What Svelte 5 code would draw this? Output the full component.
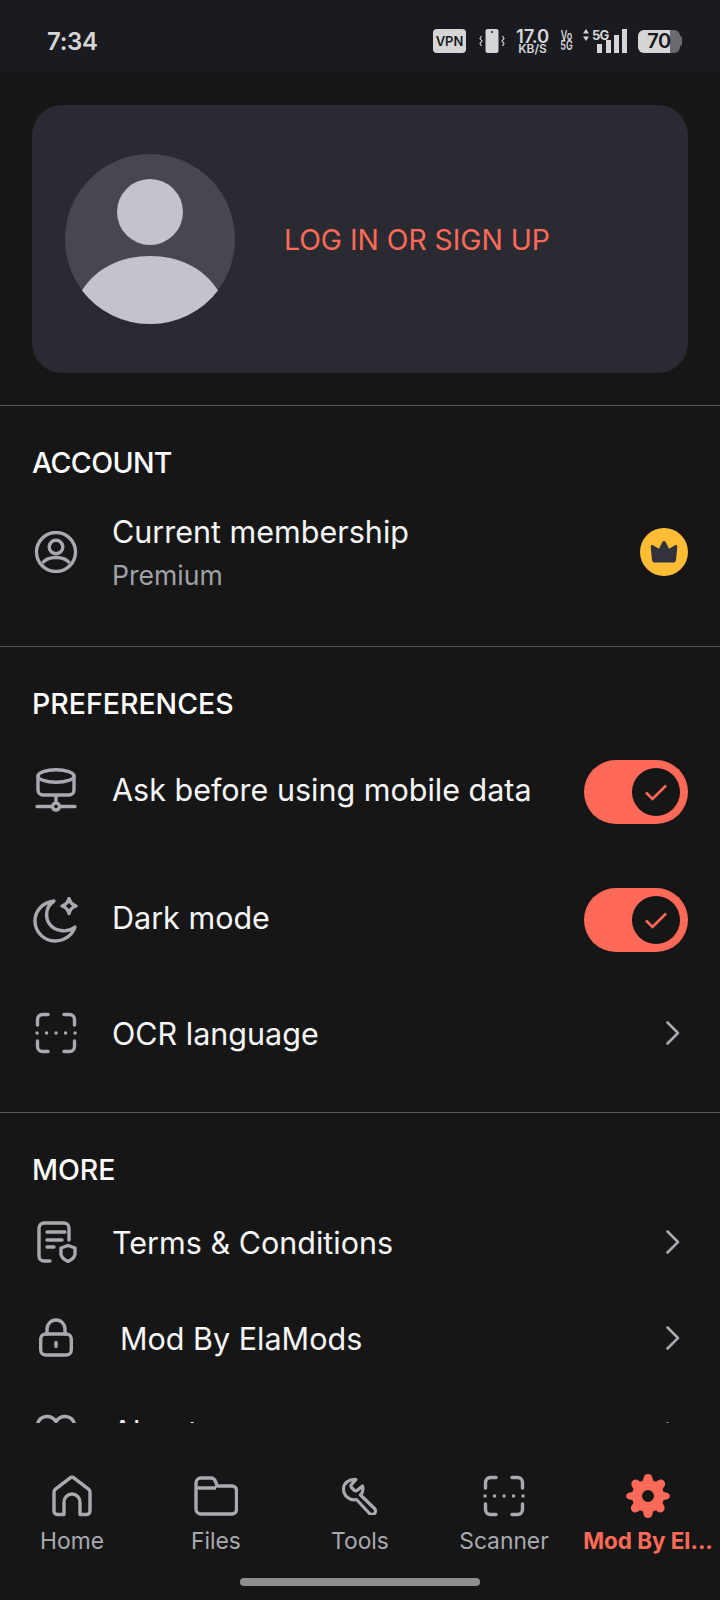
<script>
	const navItems = [
		{ label: 'Home', icon: 'home' },
		{ label: 'Files', icon: 'files' },
		{ label: 'Tools', icon: 'tools' },
		{ label: 'Scanner', icon: 'scan' },
		{ label: 'Mod By El...', icon: 'gear', active: true }
	];
</script>

{#snippet chevron()}
	<svg class="chevron" viewBox="0 0 16 26" width="16" height="26" fill="none">
		<path d="M2.500 2.500 13 13 2.500 23.500" stroke="#a9a9b0" stroke-width="2.600" stroke-linecap="round" stroke-linejoin="round" />
	</svg>
{/snippet}

{#snippet toggle()}
	<span class="toggle">
		<span class="knob">
			<svg viewBox="0 0 24 24" width="24" height="24" fill="none">
				<path d="M2 12.500 8.500 19 22 5.500" stroke="#ff6a58" stroke-width="2.600" />
			</svg>
		</span>
	</span>
{/snippet}

{#snippet scanIcon()}
	<svg viewBox="0 0 42 42" width="42" height="42" fill="none" stroke="#a9a9b0" stroke-width="3.400" stroke-linecap="round">
		<path d="M13 2.500H7.500a5 5 0 0 0-5 5V13M29 2.500h5.500a5 5 0 0 1 5 5V13M13 39.500H7.500a5 5 0 0 1-5-5V29M29 39.500h5.500a5 5 0 0 0 5-5V29" />
		<path d="M2 21h.1M11.500 21h.1M21 21h.1M30.500 21h.1M40 21h.1" />
	</svg>
{/snippet}

<div class="screen">
	<header class="status">
		<span class="time">7:34</span>
		<div class="status-icons">
			<span class="vpn">VPN</span>
			<svg class="vib" viewBox="0 0 26 24" width="26" height="24" fill="none">
				<rect x="6.500" y="0" width="13" height="24" rx="2" fill="#d6d6d6" />
				<circle cx="13" cy="3" r="1" fill="#1a1b21" />
				<path d="M2.500 7 1 9.500 3 12 1 14.500 2.500 17M23.500 7 25 9.500 23 12l2 2.500-1.500 2.500" stroke="#d6d6d6" stroke-width="1.200" />
			</svg>
			<span class="speed"><b>17.0</b><i>KB/S</i></span>
			<span class="volte"><b>Vo</b><b>5G</b></span>
			<span class="signal">
				<span class="net"><svg viewBox="0 0 6 12" width="6" height="12"><path d="M3 0 6 4.500H0zM3 12 0 7.500h6z" fill="#d6d6d6" /></svg>5G</span>
				<svg class="bars" viewBox="0 0 30 24" width="30" height="24"><path d="M0 15h5v9H0zM9 11h5v13H9zM17 6h5v18h-5zM25 0h5v24h-5z" fill="#d6d6d6" /></svg>
			</span>
			<span class="battery">
				<span class="level">70</span>
				<span class="nub"></span>
			</span>
		</div>
	</header>

	<main class="content">
		<div class="card-wrap">
			<section class="card">
				<svg class="avatar" viewBox="0 0 170 170" width="170" height="170">
					<circle cx="85" cy="85" r="85" fill="#47474f" />
					<circle cx="85" cy="58" r="33" fill="#c3c3cd" />
					<path d="M17 136.500C32 113 57 102 85 102s53 11 68 34.500A85 85 0 0 1 85 170a85 85 0 0 1-68-33.500z" fill="#c3c3cd" />
				</svg>
				<span class="login">LOG IN OR SIGN UP</span>
			</section>
		</div>

		<section class="group account">
			<h2>ACCOUNT</h2>
			<div class="row member">
				<svg class="icon" viewBox="0 0 42 42" width="42" height="42" fill="none" stroke="#a9a9b0" stroke-width="3.400">
					<circle cx="21" cy="21" r="19.500" />
					<circle cx="21" cy="16" r="6.800" />
					<path d="M7.500 32c3-4 8-5.500 13.500-5.500S31.500 28 34.500 32" />
				</svg>
				<div class="label">
					<span>Current membership</span>
					<small>Premium</small>
				</div>
				<span class="crown">
					<svg viewBox="0 0 30 24" width="30" height="24"><path d="M15 1c1 0 1.500.8 2 1.800l3 6 6-3.500c1.300-.7 2.500.2 2.300 1.600L27 20c-.2 1.500-1 2.500-2.500 2.500h-19C4 22.500 3.200 21.500 3 20L1.700 6.900C1.500 5.500 2.700 4.600 4 5.300l6 3.500 3-6C13.500 1.800 14 1 15 1z" fill="#31323c" /></svg>
				</span>
			</div>
		</section>

		<section class="group prefs">
			<h2>PREFERENCES</h2>
			<div class="row pref-row">
				<svg class="icon db" viewBox="0 0 42 44" width="42" height="44" fill="none" stroke="#a9a9b0" stroke-width="3.400" stroke-linecap="round">
					<ellipse cx="21" cy="8" rx="18" ry="6.300" />
					<path d="M3 8v14a5 5 0 0 0 5 5h26a5 5 0 0 0 5-5V8M21 27v7M2 38.500h15M25 38.500h15" />
					<circle cx="21" cy="38.500" r="3.500" />
				</svg>
				<span class="text">Ask before using mobile data</span>
				{@render toggle()}
			</div>
			<div class="row pref-row dark">
				<svg class="icon" viewBox="0 0 46 46" width="46" height="46" fill="none" stroke="#a9a9b0" stroke-width="3.400" stroke-linejoin="round">
					<path d="M21 4C10 5.500 2 13 2 24c0 11 9 20 20 20 9.500 0 17-5.500 20-14-4 3-9 4.500-14 3.500C18 32 12 24 14 14c.8-4 3.500-7.500 7-10z" />
					<path d="M36 1.500c.8 3.500 2.500 6 7 7.500-4.500 1.500-6.200 4-7 7.500-.8-3.500-2.500-6-7-7.500 4.500-1.500 6.200-4 7-7.500z" />
				</svg>
				<span class="text">Dark mode</span>
				{@render toggle()}
			</div>
			<div class="row plain ocr">
				<span class="icon">{@render scanIcon()}</span>
				<span class="text">OCR language</span>
				{@render chevron()}
			</div>
		</section>

		<section class="group more">
			<h2>MORE</h2>
			<div class="row plain terms">
				<svg class="icon" viewBox="0 0 42 42" width="42" height="42" fill="none" stroke="#a9a9b0" stroke-width="3.400" stroke-linecap="round">
					<path d="M15 40H9a5 5 0 0 1-5-5V7a5 5 0 0 1 5-5h20a5 5 0 0 1 5 5v12" />
					<path d="M12 11h18M12 19h15M12 26h7" />
					<path d="M33 24.500l7 2.500v6c0 3.500-3 5.500-7 7.500-4-2-7-4-7-7.500v-6z" stroke-linejoin="round" />
				</svg>
				<span class="text">Terms &amp; Conditions</span>
				{@render chevron()}
			</div>
			<div class="row plain lock">
				<svg class="icon" viewBox="0 0 42 42" width="42" height="42" fill="none" stroke="#a9a9b0" stroke-width="3.400" stroke-linecap="round">
					<rect x="5.700" y="17" width="30.600" height="21" rx="5" />
					<path d="M12 17v-5a9 9 0 0 1 18 0v5M21 25.500v4" />
				</svg>
				<span class="text indent">Mod By ElaMods</span>
				{@render chevron()}
			</div>
			<div class="row plain about">
				<svg class="icon" viewBox="0 0 42 42" width="42" height="42" fill="none" stroke="#a9a9b0" stroke-width="3.400">
					<path d="M21 39 5 23C0 17 1 5 11 3.500c5-.5 8 2 10 5 2-3 5-5.500 10-5C41 5 42 17 37 23z" />
				</svg>
				<span class="text">About</span>
				{@render chevron()}
			</div>
		</section>
	</main>

	<nav class="tabs">
		{#each navItems as item}
			<div class="tab" class:active={item.active}>
				<span class="tab-icon">
					{#if item.icon === 'home'}
						<svg viewBox="0 0 42 42" width="42" height="42" fill="none" stroke="#a9a9b0" stroke-width="3.400" stroke-linejoin="round">
							<path d="M3 17.500c0-1.500.5-2.500 1.500-3.300L18.500 3.300c1.500-1.200 3.500-1.200 5 0l14 10.900c1 .8 1.500 1.800 1.500 3.300V36a3.500 3.500 0 0 1-3.500 3.500H29V27a8 8 0 0 0-16 0v12.500H6.500A3.500 3.500 0 0 1 3 36z" />
						</svg>
					{:else if item.icon === 'files'}
						<svg viewBox="0 0 44 42" width="44" height="42" fill="none" stroke="#a9a9b0" stroke-width="3.400" stroke-linejoin="round">
							<path d="M2 8a5 5 0 0 1 5-5h10c3 0 4 1.500 5 4.500L23 11h15a4.500 4.500 0 0 1 4.500 4.500v19a4.500 4.500 0 0 1-4.500 4.500H7a5 5 0 0 1-5-5zM2 13h20" />
						</svg>
					{:else if item.icon === 'tools'}
						<svg viewBox="0 0 38 38" width="38" height="38" fill="none" stroke="#a9a9b0" stroke-width="3.200" stroke-linejoin="round">
							<path d="M15 2.500 10.500 7.500Q9.500 9 10.500 10.500L13 13Q14.500 14.500 16 13.500L21.500 9C22.500 13 21.500 16 19.500 18L33.500 31.500a3.500 3.500 0 0 1-5 5L15.500 22.500C9 24 2.500 19 2.500 12 2.500 6 8 2 15 2.500z" />
						</svg>
					{:else if item.icon === 'scan'}
						{@render scanIcon()}
					{:else}
						<svg viewBox="0 0 44 44" width="44" height="44">
							<path fill-rule="evenodd" d="M22 0c2.500 0 4 1.500 4.500 4l.5 2.500 3 1.300 2.300-1.500c2-1.300 4.200-1 5.700.7 1.400 1.500 1.600 3.600.4 5.500L36.500 15l1.200 3 2.500.5c2.300.5 3.800 2 3.800 3.500s-1.500 3-3.800 3.500l-2.500.5-1.200 3 1.400 2.500c1.200 1.900 1 4-.4 5.500-1.500 1.700-3.700 2-5.700.7L30 36.200l-3 1.300-.5 2.500c-.5 2.500-2 4-4.500 4s-4-1.500-4.500-4l-.5-2.500-3-1.300-2.300 1.500c-2 1.300-4.200 1-5.700-.7-1.400-1.500-1.600-3.600-.4-5.500L7.500 29l-1.200-3-2.500-.5C1.500 25 0 23.500 0 22s1.500-3 3.800-3.500l2.500-.5 1.200-3-1.400-2.500c-1.200-1.900-1-4 .4-5.500 1.500-1.700 3.700-2 5.700-.7L14 7.800l3-1.300.5-2.500C18 1.500 19.500 0 22 0zm0 16a6 6 0 1 0 0 12 6 6 0 0 0 0-12z" fill="#ff6a58" />
						</svg>
					{/if}
				</span>
				<span class="tab-label">{item.label}</span>
			</div>
		{/each}
	</nav>
	<div class="home-bar"><span></span></div>
</div>

<style>
	:global(body) {
		margin: 0;
		background: #161616;
	}
	.screen {
		width: 720px;
		height: 1600px;
		display: flex;
		flex-direction: column;
		overflow: hidden;
		background: #161616;
		color: #f6f6f6;
		font-family: Inter, 'Liberation Sans', sans-serif;
	}
	.status {
		height: 72px;
		flex: none;
		display: flex;
		align-items: center;
		justify-content: space-between;
		padding: 10px 38px 0 47px;
		box-sizing: border-box;
		background: #1a1b21;
		color: #d6d6d6;
	}
	.time {
		font-size: 24px;
		font-weight: 600;
		letter-spacing: -0.3px;
	}
	.status-icons {
		display: flex;
		align-items: center;
		gap: 11px;
	}
	.vpn {
		width: 33px;
		height: 24px;
		margin-right: 2px;
		display: grid;
		place-items: center;
		border-radius: 4px;
		background: #d6d6d6;
		color: #1a1b21;
		font-size: 13px;
		font-weight: 600;
	}
	.speed {
		width: 33px;
		margin-right: 1px;
		display: flex;
		flex-direction: column;
		align-items: center;
	}
	.speed b {
		font-size: 18.500px;
		font-weight: 600;
		line-height: 15px;
		letter-spacing: -0.2px;
	}
	.speed i {
		font-size: 12px;
		font-style: normal;
		font-weight: 600;
		line-height: 9px;
	}
	.volte {
		width: 11px;
		display: flex;
		flex-direction: column;
		align-items: center;
		font-size: 12.500px;
		line-height: 10px;
		transform: scaleX(0.72);
	}
	.volte b {
		font-weight: 600;
	}
	.signal {
		display: flex;
		align-items: flex-end;
		position: relative;
		width: 44px;
		height: 24px;
		justify-content: flex-end;
	}
	.net {
		position: absolute;
		left: 0;
		top: 0;
		display: flex;
		align-items: center;
		gap: 3px;
		font-size: 13px;
		line-height: 12px;
		font-weight: 700;
		letter-spacing: -0.8px;
	}
	.battery {
		display: flex;
		align-items: center;
	}
	.level {
		width: 42px;
		height: 23px;
		border-radius: 6px;
		display: flex;
		align-items: center;
		justify-content: center;
		background: linear-gradient(90deg, #d6d6d6 76%, #6b6b6f 76%);
		color: #17171c;
		font-size: 20px;
		font-weight: 600;
		letter-spacing: -0.5px;
	}
	.nub {
		width: 2px;
		height: 10px;
		border-radius: 0 2px 2px 0;
		background: #6b6b6f;
	}
	.content {
		flex: 1;
		min-height: 0;
		overflow: hidden;
	}
	.card-wrap {
		padding: 33px 32px 32px;
	}
	.card {
		height: 268px;
		box-sizing: border-box;
		padding: 0 33px;
		display: flex;
		align-items: center;
		gap: 49px;
		border-radius: 30px;
		background: #2a2a32;
	}
	.login {
		margin-top: 2px;
		color: #ff6a58;
		font-size: 28.300px;
	}
	.group {
		border-top: 1px solid #55555a;
		padding: 0 32px;
	}
	h2 {
		margin: 0;
		font-size: 28.500px;
		font-weight: 500;
		line-height: 34px;
		color: #fff;
		padding-top: 40px;
	}
	.account h2 {
		letter-spacing: -0.6px;
	}
	.row {
		display: flex;
		align-items: center;
		gap: 32px;
	}
	.icon {
		flex: none;
		display: grid;
		place-items: center;
		width: 48px;
	}
	.text,
	.label span {
		font-size: 30.500px;
		font-weight: 400;
		color: #f6f6f6;
	}
	.text {
		flex: 1;
	}
	.indent {
		padding-left: 8px;
	}
	.label {
		flex: 1;
		display: flex;
		flex-direction: column;
		gap: 9px;
	}
	.label small {
		font-size: 26.600px;
		color: #a1a1a8;
	}
	.member {
		height: 96px;
		margin-top: 24px;
		margin-bottom: 46px;
	}
	.crown {
		width: 48px;
		height: 48px;
		border-radius: 50%;
		background: #ffbd36;
		display: grid;
		place-items: center;
	}
	.pref-row {
		height: 64px;
		margin-top: 39px;
	}
	.pref-row .text {
		margin-bottom: 5px;
	}
	.db {
		margin-bottom: 4px;
	}
	.toggle {
		width: 104px;
		height: 64px;
		box-sizing: border-box;
		padding: 8px;
		display: flex;
		justify-content: flex-end;
		border-radius: 32px;
		background: #ff6a58;
	}
	.knob {
		width: 48px;
		height: 48px;
		border-radius: 50%;
		background: #161616;
		display: grid;
		place-items: center;
	}
	.chevron {
		flex: none;
		margin-right: 7px;
	}
	.plain {
		height: 60px;
	}
	.ocr {
		margin: 51px 0 49px;
	}
	.terms {
		margin-top: 25px;
	}
	.lock,
	.about {
		margin-top: 36px;
	}
	.about .text {
		margin-bottom: 6px;
	}
	.pref-row.dark {
		margin-top: 64px;
	}
	.tabs {
		flex: none;
		height: 153px;
		box-sizing: border-box;
		padding: 51px 0 0;
		display: grid;
		grid-template-columns: repeat(5, 1fr);
		background: #161616;
		position: relative;
	}
	.tab {
		display: flex;
		flex-direction: column;
		align-items: center;
		gap: 9px;
		min-width: 0;
	}
	.tab-icon {
		height: 44px;
		display: grid;
		place-items: center;
	}
	.tab-label {
		font-size: 22.800px;
		color: #a9a9b0;
		white-space: nowrap;
	}
	.active .tab-label {
		color: #ff6a58;
		font-size: 22.400px;
		font-weight: 700;
	}
	.home-bar {
		flex: none;
		height: 24px;
		box-sizing: border-box;
		padding-top: 2px;
		display: flex;
		justify-content: center;
	}
	.home-bar span {
		width: 240px;
		height: 8px;
		border-radius: 4px;
		background: #8e8e8e;
	}
</style>
